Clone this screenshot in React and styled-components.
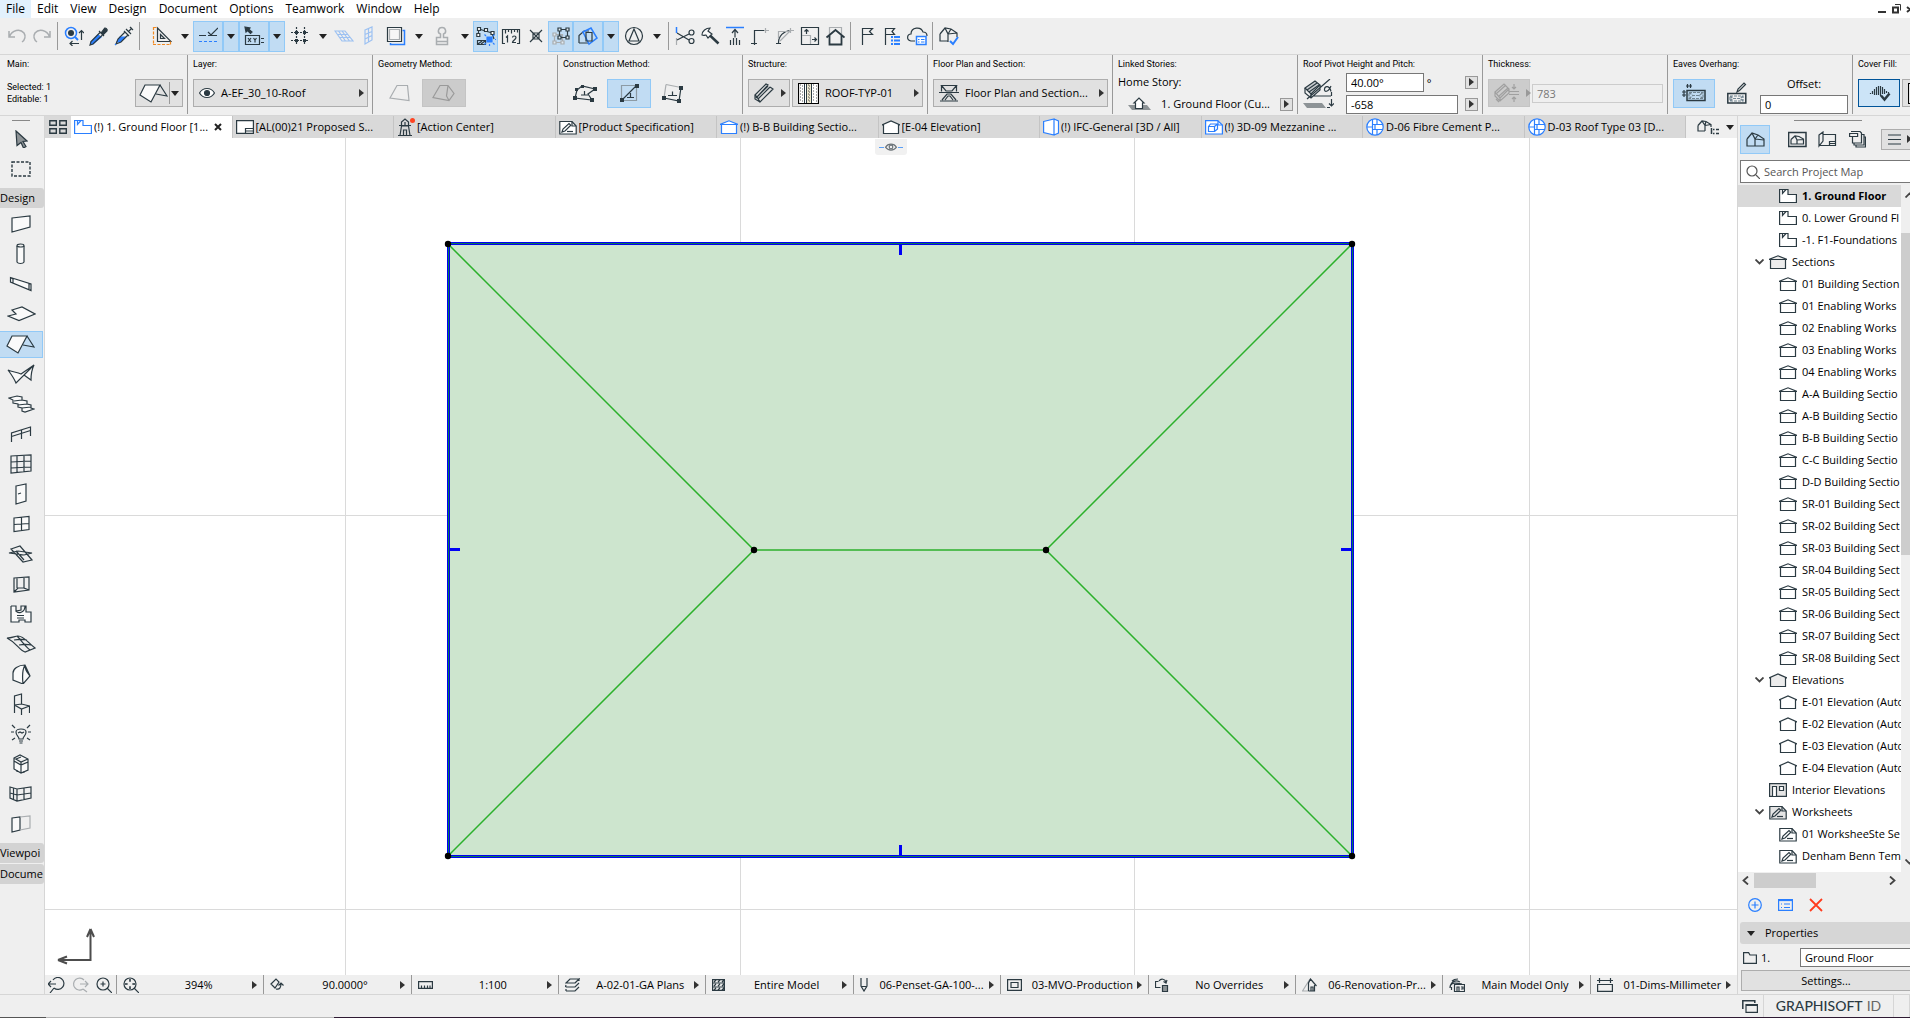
import React, { useState } from "react";
import styled, { createGlobalStyle, css } from "styled-components";

const INK = "#2b3a42";
const BLUE = "#2a7fff";
const GREY = "#a9adb0";
const PANEL = "#efefef";
const LINE = "#d6d6d6";
const ACTIVE = "#c1dcf3";
const ACTIVE_LINE = "#91c9f7";

const GlobalStyle = createGlobalStyle`
  * { box-sizing: border-box; }
  html, body, #root { height: 100%; }
  body {
    margin: 0;
    overflow: hidden;
    background: ${PANEL};
    color: #000;
    font-family: "Open Sans", "Noto Sans", sans-serif;
    font-size: 11px;
    line-height: 16px;
  }
  button, input {
    font: inherit;
    color: inherit;
    margin: 0;
  }
  button {
    padding: 0;
    border: 0;
    background: none;
    white-space: nowrap;
  }
  svg { display: block; flex: none; }
`;

/* ---------- icons: [width, height, drawing] ---------- */

const roofShape = (
  <>
    <path d="M6 2h15L12 19 1 12z" fill="#fafafa" />
    <path d="M21 2l7 11-11-2" />
  </>
);

const pencilPage = (c, fill) => (
  <>
    <path d="M.8 1.500H13l4.200 4.500v8H.8z" fill={fill} stroke={c} />
    <path d="M13 1.500V6h4" stroke={c} />
    <path d="M3 12l1-3 6-5.500 1.800 1.800L6 11z" stroke={c} />
    <path d="M8 11.500h6" stroke={c} />
  </>
);

const storyShape = (c) => (
  <>
    <path d="M.6 1.500h8.400v5h8.400v8H.6z" fill="#fff" stroke={c} />
    <path d="M3.500 1.500v4l3.500-4" stroke={c} />
  </>
);

const detailShape = (
  <>
    <circle cx="9" cy="9" r="8.200" fill="#fff" stroke={BLUE} />
    <path d="M6.500 1.500v15M11 1v5.500M11 17v-5.500M1 9h5.500M6.500 6.500H11M6.500 11.500H11M9 6.500h8M9 11.500h8M9 6.500v5" stroke={BLUE} />
  </>
);

const compositeDots = [];
for (let y = 2; y < 20; y += 3) {
  compositeDots.push(`M2 ${y}h1M4 ${y + 1}h1M10 ${y}h1M11 ${y + 1}h1M15 ${y}h1M18 ${y + 1}h1`);
}

const icons = {
  undo: [20, 18, <path key="a" stroke={GREY} strokeWidth="1.500" d="M2 4v6h6M2.500 9.500C5 3 13 1 17 6c2 3 1 7-2 9" />],
  redo: [20, 18, <path key="a" stroke={GREY} strokeWidth="1.500" d="M18 4v6h-6M17.500 9.500C15 3 7 1 3 6c-2 3-1 7 2 9" />],
  find: [20, 20, <>
    <circle cx="7" cy="7" r="5.500" stroke={BLUE} strokeWidth="1.500" />
    <path d="M11 11l3 3" stroke={BLUE} strokeWidth="2" />
    <circle cx="7" cy="7" r="3" fill={INK} stroke="none" />
    <path d="M17.500 5v9M15 7l2.500-2.500L20 7M15 17.500H6M8.500 15L6 17.500 8.500 20" />
  </>],
  dropper: [20, 20, <>
    <path d="M9 9l-7 7v2h2l8-7z" fill={BLUE} stroke={BLUE} />
    <path d="M10 5l5 5M12 7l3-4c1-2 4 0 3 2l-4 4z" fill={INK} />
    <path d="M11 6.500l-9 9-1 3.500 3-1 9.500-9" />
  </>],
  syringe: [20, 20, <>
    <path d="M6 11h5l-5 5H3z" fill={BLUE} stroke={BLUE} />
    <path d="M10 5l5 5M12 3l5 5M14.500 5.500L18 2M16 1l3 3M11 6l-7 7-2 5 5-2 7-7" />
    <path d="M2 18l-1 1" stroke={BLUE} />
  </>],
  square: [20, 20, <>
    <path d="M5.500 2v13.500H19zM8.500 8.500v4h4z" />
    <path d="M1.500 1v18M1 18.500h18" stroke="#f08a24" strokeDasharray="3 1.500" />
    <path d="M1.500 1.500h3M18.500 15.500v3" stroke="#f08a24" />
  </>],
  guide: [20, 20, <>
    <path d="M1 9.500h7M10 9.500h9M10 6l3 3 7-7" />
    <path d="M1 15.500h18" stroke={BLUE} strokeDasharray="3 2" />
  </>],
  coords: [22, 20, <>
    <path d="M2 1l5 1-1 1.500L9 6 7.500 7.500 4.500 4.500 3 6z" fill={INK} />
    <path d="M2.500 9.500h14v9h-14zM18 12.500h3M18 16.500h3M5 12l3 4M8 12l-3 4M10.500 12l1.500 2 1.500-2M12 14v2.500" />
  </>],
  snapGrid: [20, 20, <>
    <path d="M6.500 1v18M14.500 1v18M1 6.500h18M1 14.500h18" strokeDasharray="2 1" />
    <path d="M5 5h3v3H5zM13 5h3v3h-3zM5 13h3v3H5zM13 13h3v3h-3z" fill={INK} stroke="none" />
  </>],
  skewGrid: [20, 20, <path key="a" stroke="#9cc1f2" d="M1 5h10l8 10H8zM4 8.500h9.500M6 11.500h10M4.500 5l7 10M8 5l7.500 10" />],
  skewWall: [10, 20, <path key="a" stroke="#9cc1f2" d="M1 4l7-3v13l-7 4zM1 8.500l7-3M1 13l7-3.500M4.500 2.500v13.500" />],
  trace: [20, 20, <>
    <path d="M4.500 17v1.500h14v-14h-2" stroke={BLUE} strokeWidth="1.500" />
    <path d="M1.500 1.500h14v14h-14z" fill="#f6f6f6" />
    <path d="M3.500 3.500h10v10h-10z" stroke={GREY} />
  </>],
  stamp: [14, 20, <path key="a" stroke={GREY} strokeWidth="1.500" d="M1.500 18.500v-7h4V8C2 7 3 1.500 7 1.500S12 7 8.500 8v3.500h4v7zM1.500 15.500h11" />],
  editPoly: [20, 20, <>
    <path d="M3 3l13 4M3 3L2 9M16 7l2 6M1.500 14.500h8v4h-8zM2 18l4-3M5 18l4-3" />
    <path d="M1.500 1.500h3v3h-3zM8.500 2.500h3v3h-3zM.8 7.500h3v3h-3zM15 5.500h3v3h-3z" fill="#fff" />
    <path d="M11 11h5v5h-5z" fill={BLUE} stroke={BLUE} />
    <path d="M8.500 8.500l1.500 1.500M18.500 8.500L17 10M8.500 18.500L10 17M18.500 18.500L17 17M13.500 18v2M19 13.500h1" stroke={BLUE} />
  </>],
  ruler12: [20, 20, <>
    <path d="M4 17.500H1.500v-14h17v14H16M4.500 3.500v4M7.500 3.500v2.500M10.500 3.500v4M13.500 3.500v2.500M16.500 3.500v3" />
    <path d="M5 11.500L6.500 10v6.500M11.500 11.500c0-2 3.500-2 3.500 0s-3.500 3-3.500 5H15" />
  </>],
  cross: [14, 14, <path key="a" d="M1 1l12 12M13 1L1 13M4 4h6v6H4z" />],
  groupNodes: [20, 20, <>
    <path d="M3.500 8.500h8v8h-8z" stroke={GREY} />
    <path d="M8.500 3.500h8v8h-8z" />
    <path d="M2 7h3v3H2zM2 15h3v3H2zM10 15h3v3h-3z" fill="#dfeaf3" stroke={GREY} />
    <path d="M7 2h3v3H7zM15 2h3v3h-3zM15 10h3v3h-3zM7 10h3v3H7z" fill="#dfeaf3" />
  </>],
  rotate3d: [20, 20, <>
    <path d="M1 17V9.500L6 5h5M1 17h9" />
    <path d="M5 6l8-4 6 10-8 6z" stroke={BLUE} strokeWidth="1.500" />
    <path d="M8 6.500h6V15H8z" />
  </>],
  north: [20, 20, <>
    <circle cx="10" cy="10" r="8.500" />
    <path d="M10 3L5 15h10z" />
  </>],
  scissors: [20, 20, <>
    <path d="M1.500 1v6" stroke={BLUE} strokeWidth="1.500" /><path d="M1.500 12v7" stroke={GREY} />
    <path d="M2 7l12 7M2 14l12-6" />
    <circle cx="16.500" cy="6.500" r="2.500" /><circle cx="16.500" cy="15" r="2.500" />
  </>],
  axe: [20, 20, <>
    <path d="M2 9c0-4 4-7 8-7l-2 3 4 3-4 4-2-3c-1 0-2 1-4 0z" fill="#fafafa" />
    <path d="M10 9.500l8.500 8" strokeWidth="2.500" />
  </>],
  adjust: [20, 20, <>
    <path d="M1 1.500h18" stroke={BLUE} strokeWidth="1.500" />
    <path d="M10 3.500v8M7 7l3-3.500L13 7M5.500 14v5M8.500 12v7M11.500 12v7M14.500 14v5" />
  </>],
  corner: [20, 20, <><path d="M4.500 19V4.500H14M1 17.500h6" /><path d="M14 4.500h5M15.500 2v5" stroke={GREY} /></>],
  fillet: [20, 20, <><path d="M3.500 18C3 10 9 5 15 4.500M1 17.500h5" /><path d="M3.500 13V5.500H14M14 4.500h5M15.500 2v5M5 15L15 5" stroke={GREY} /></>],
  resize: [20, 20, <>
    <path d="M1.500 1.500h17v17h-17z" /><path d="M2 9.500h8.500V18" stroke={GREY} />
    <path d="M6.500 8V3M4.500 5.500l2-2 2 2M12 13.500h5M14.500 11.500l2 2-2 2" />
  </>],
  home: [20, 20, <>
    <path d="M4.500 8V1.500h12V8" stroke={GREY} />
    <path d="M1.500 11.500L10.500 4l9 7.500M4.500 9.500v9h12v-9" strokeWidth="1.800" />
  </>],
  flag: [16, 20, <path key="a" d="M3.500 19V2.500h10l-3 3 3 3h-10" />],
  flagList: [20, 20, <>
    <path d="M3.500 19V2.500h9l-2.500 3 2.500 3h-9" />
    <path d="M9 11h2M12 11h6M9 14.500h2M12 14.500h6M9 18h2M12 18h6" stroke={BLUE} strokeWidth="2" />
  </>],
  cloud: [22, 20, <>
    <path d="M9 15H5c-5-1-4-7 0-7 0-7 10-8 12-2 3 0 4 2 4 4" />
    <path d="M10.500 10.500h9.500v8h-9.500z" fill="#fff" stroke={BLUE} strokeWidth="1.500" />
    <path d="M12 13.500h1.500M15 13.500h3.500M12 16h1.500M15 16h3.500" stroke={BLUE} />
  </>],
  houseCheck: [20, 20, <>
    <path d="M1 8l5-6 6 1 6 4v4M1 8v7h8M9 16V8L6 2M9 8l9-1M12 3L9 8" />
    <path d="M11 15l3 3 5-7" stroke={BLUE} strokeWidth="2" />
  </>],
  roof: [29, 21, roofShape],
  trapezoid: [22, 18, <path key="a" stroke={GREY} d="M1 14L8 1.500h10.500L20 16.500z" />],
  trapezoidEdge: [24, 18, <path key="a" stroke="#9a9a9a" d="M1 13.500L8 1.500h8l6 8-5 7zM16 1.500L14.500 12l2.500 4.500" />],
  eye: [16, 12, <>
    <path d="M.5 6C4 0 12 0 15.500 6 12 12 4 12 .5 6z" fill="#fff" />
    <circle cx="8" cy="6" r="2.500" fill={INK} />
  </>],
  quickEye: [24, 8, <>
    <path d="M0 4.500h5M19 4.500h5" stroke="#5a9ff5" />
    <path d="M6.500 4.200C9 0 15 0 17.500 4.200 15 8 9 8 6.500 4.200z" stroke="#6b7378" />
    <circle cx="12" cy="4" r="1.800" stroke="#6b7378" />
  </>],
  poly: [24, 18, <>
    <path d="M2 14L4 6l5-4 13 3-7 5 4 6z" />
    <path d="M0 12h4v4H0zM2 4h3v3H2zM8 1h3v3H8zM20 3h4v4h-4zM17 14h4v4h-4z" fill={INK} stroke="none" />
    <path d="M8 11h7M11.500 7v4" />
  </>],
  rectPoly: [20, 18, <>
    <path d="M2.500 1.500h15v15h-15z" stroke="#8d9ba5" />
    <path d="M2.500 16.500l15-15M8 13.500h7M11.500 9v4.500" />
    <path d="M1 14h4v4H1zM16 0h4v4h-4z" fill={INK} stroke="none" />
  </>],
  rotRect: [22, 20, <>
    <path d="M4 1.500l15 3" stroke={GREY} /><path d="M4 1.500L2 15" stroke={GREY} />
    <path d="M2 15l15 3 2-13.500M6 12.500h9M10.500 8.500v4" />
    <path d="M0 13h4v4H0zM17 3h4v4h-4zM15 16h4v4h-4z" fill={INK} stroke="none" />
  </>],
  plank: [20, 20, <path key="a" d="M1 12L12 1l2 1L3 14zM3 14l3 5L19 6l-3-2M1 12v4l5 3M4 16L16 4M2 15L14 3" />],
  composite: [21, 21, <>
    <path d="M0 0h21v21H0z" fill="#fff" stroke="none" />
    <path d="M8 0h5v21H8z" fill="#efe9cf" stroke="none" />
    <path d={compositeDots.join("")} stroke="#555" />
    <path d="M6.500 0v21M8.500 0v21M13.500 0v21" strokeWidth="1" />
    <path d="M.5.5h20v20H.5z" stroke="#000" />
  </>],
  planSection: [20, 18, <path key="a" d="M2.500 1v6.500M17.500 1v6.500M0 8.500h20M2.500 1.500h15L13 7H7zM1 17h18M3 16L8 10h4l5 6M6 16l3-4h2l3 4" />],
  homeStory: [23, 14, <>
    <path d="M0 8h19l4 5H4z" fill="#8d9396" stroke="none" />
    <path d="M6 6l5-5 5 5h-1.500v5.500h-7V6z" fill="#fff" />
  </>],
  pitch: [31, 29, <>
    <path d="M2 9L12 2l5 4-9 9z" fill="#c9cdd0" />
    <path d="M2 9v5l6 5 9-8V6M8 15v4M4 11l10-7M6 13l10-7M4 20L27 0M10 17h18" />
    <path d="M28 7c-3 7-7 6-6.500 3s5-4 6.500 2.500" />
    <path d="M0 24h19l4 5H4z" fill="#8d9396" stroke="none" />
    <path d="M28.500 13v4M28.500 20v7M26 24.500l2.500 2.500 2.500-2.500M24 28.500h3" />
  </>],
  thick: [26, 20, <path key="a" stroke="#a0a0a0" d="M1 9L10 1l5 5-9 9zM1 9v4l5 5 9-8V6M6 15v3M3 10l9-8M5 13l9-8M5 19l-3-3M20 1v5M18 4l2 2 2-2M20 19v-5M18 16l2-2 2 2M15 8.500h10M15 11.500h10" />],
  eaves: [24, 18, <>
    <path d="M5 6.500h18v10H5z" strokeWidth="1.500" />
    <path d="M7 8.500h14v6H7zM7 8.500l4 3h6l4-3M7 14.500l4-3M21 14.500l-4-3" stroke="#718592" strokeDasharray="3 1" />
    <path d="M5.500 0v4M8.500 0v4M4 2h6M0 8h4M0 11h4M2 6v7" />
  </>],
  eavesEdit: [20, 22, <>
    <path d="M.8 11.500h18v9.500H.8z" strokeWidth="1.500" />
    <path d="M3 14h13v5H3zM3 14l3 2.500h7L16 14M3 19l3-2.500M16 19l-3-2.500" stroke="#718592" strokeDasharray="3 1" />
    <path d="M10 10l1-3 6-6 1.500 1.500-6 6z" />
  </>],
  coverFill: [22, 18, <>
    <path d="M1.500 9v1M3.500 7v3M5.500 5v6M7.500 3v8M9.500 2v9M11.500 2v10M13.500 3v7M15.500 5v5M17.500 7v2M19.500 8v1" />
    <path d="M12 11.500l3.500 4 5-6" strokeWidth="2.500" />
  </>],
  grid4: [18, 14, <path key="a" strokeWidth="1.400" d="M.8.8h6.500v4.500H.8zM10.800.8h6.500v4.500h-6.500zM.8 8.700h6.500v4.500H.8zM10.800 8.700h6.500v4.500h-6.500z" />],
  storyBlue: [18, 16, storyShape(BLUE)],
  story: [18, 16, storyShape(INK)],
  layout: [18, 14, <>
    <path d="M.6.6h16.800v12.800H.6z" fill="#fff" /><path d="M9.500 13.500v-5h8M9.500 11h8" />
  </>],
  tower: [18, 18, <>
    <path d="M3 17.500L4.500 8h7L13 17.500zM2 7.500h12M4.500 7V4l3.500-3 3.500 3v3M6.500 17V12h3v5M1 17.500h14M8 4v3" />
    <circle cx="15.500" cy="2.500" r="2.500" fill="#ff4422" stroke="none" />
  </>],
  pencil: [18, 15, pencilPage(INK, "#fff")],
  pencilGrey: [18, 15, pencilPage(INK, "#e4e4e4")],
  sectionBlue: [18, 14, <>
    <path d="M1.500 4v9.500h15V4" fill="#fff" stroke={BLUE} /><path d="M0 4.500L9 .8l9 3.700z" fill="#fff" stroke={BLUE} />
  </>],
  section: [18, 14, <><path d="M1.500 4v9.500h15V4" fill="#fff" /><path d="M0 4.500L9 .8l9 3.700z" fill="#fff" /></>],
  sectionGrey: [18, 14, <><path d="M1.500 4v9.500h15V4" fill="#ececec" /><path d="M0 4.500L9 .8l9 3.700z" fill="#ececec" /></>],
  elevation: [18, 14, <path key="a" fill="#fff" d="M0 5L9 1l9 4h-1.500v8.500h-15V5z" />],
  elevationGrey: [18, 14, <path key="a" fill="#ececec" d="M0 5L9 1l9 4h-1.500v8.500h-15V5z" />],
  box3d: [16, 18, <>
    <path d="M.6 3.500L11 1v16L.6 14.500zM11 1l4.500 2v12L11 17" fill="#fff" stroke={BLUE} />
  </>],
  doc3d: [18, 15, <>
    <path d="M.6.6h12l4.800 4.400v9H.6z" fill="#fff" stroke={BLUE} />
    <path d="M3.500 6.500h6v5h-6zM3.500 6.500l2-2.500h7v5l-3 2.500M9.500 6.500l3-2.500M13 .5V5h4" stroke={BLUE} />
  </>],
  detail: [18, 18, detailShape],
  modelList: [22, 16, <>
    <path d="M1 6.500L5 2l4 .5 5 3V8M1 6.500V12h7M8 12V6.500L5 2M8 6.500l6-1M9 2.500L8 6" />
    <path d="M14.500 9v6M16 10.500h1.500M19 10.500h3M16 14.500h1.500M19 14.500h3" strokeWidth="1.500" />
  </>],
  house: [19, 17, <path key="a" d="M1 8l5-6 6 2 6 4v7H9V8L6 2M1 8v7h8M9 8l9 1M12 4L9 8" />],
  houseFrame: [19, 17, <>
    <path d="M.6 1.500h17.400v14H.6z" strokeWidth="1.500" />
    <path d="M3 8.500L7 5l4 .5L15.500 8v5H9V9L7 5M3 8.500V13h6M9 9l6.500-.5" />
  </>],
  viewBook: [19, 17, <path key="a" d="M1 4l4-3v9l-4 5zM5 3.500h12.500v11H1M11.500 14.500v-4h6M11.500 12.500h6" />],
  publisher: [17, 18, <>
    <path d="M2 1.500h9l1.500 1.500v10h-9V6M.6 3.500h8v3h-8z" /><path d="M5 13v2h10V4.500h-2M7 15.500v1.500h9.500V7h-1.500" />
  </>],
  menu: [13, 11, <path key="a" d="M0 1h13M0 5.500h13M0 10h13" />],
  search: [14, 14, <><circle cx="6" cy="6" r="5" stroke="#555" /><path d="M10 10l4 4" stroke="#555" /></>],
  chevDown: [9, 6, <path key="a" stroke="#444" strokeWidth="1.800" d="M.5.5l4 4 4-4" />],
  chevUp: [9, 6, <path key="a" stroke="#444" strokeWidth="1.800" d="M.5 5.500l4-4 4 4" />],
  chevLeft: [7, 9, <path key="a" stroke="#444" strokeWidth="1.800" d="M6 .5l-4.500 4 4.500 4" />],
  chevRight: [7, 9, <path key="a" stroke="#444" strokeWidth="1.800" d="M1 .5l4.500 4-4.500 4" />],
  interior: [18, 14, <><path d="M.6.6h16.800v12.800H.6z" fill="#e4e4e4" /><path d="M3.500 13V3.500h4V13M10.500 3.500h4v4h-4z" fill="#fff" /></>],
  add: [14, 14, <><circle cx="7" cy="7" r="6.300" stroke={BLUE} /><path d="M7 3.500v7M3.500 7h7" stroke={BLUE} /></>],
  listBlue: [15, 12, <>
    <path d="M.6.6h13.800v10.800H.6z" stroke={BLUE} /><path d="M.5 1.500h14" stroke={BLUE} />
    <path d="M3 5h1M6 5h6M3 8.500h1M6 8.500h6" stroke={BLUE} />
  </>],
  remove: [14, 14, <path key="a" stroke="#ff3b1d" strokeWidth="1.800" d="M1 1l12 12M13 1L1 13" />],
  folder: [14, 12, <path key="a" d="M.6.6h5l1.400 2.400h6.400v8.400H.6z" />],
  windows: [16, 13, <><path d="M.8 9V.8h12V3" strokeWidth="1.500" /><path d="M4 4.500h11.400v7.900H4zM4 5.500h11.400" /></>],
  zoomBack: [17, 16, <><path d="M5 3a6 6 0 1 1 1 8M6 11l-4 5M0 7h8M3 4L0 7l3 3" /></>],
  zoomNext: [17, 16, <><path stroke={GREY} d="M12 3a6 6 0 1 0-1 9M11 12l4 3M8 7h8M13 4l3 3-3 3" /></>],
  zoomIn: [16, 16, <><circle cx="7" cy="7" r="6" /><path d="M11 11l5 5M7 4.500v5M4.500 7h5" /></>],
  zoomFit: [16, 16, <><circle cx="7" cy="7" r="6" /><path d="M11 11l5 5M7 2v3M7 9v3M2 7h3M9 7h3M6 3h2M6 11h2M3 6v2M11 6v2" /></>],
  orient: [14, 13, <path key="a" d="M1 6l5-5 3 3-4 6zM6 11c4 1 5-2 5-6M8.500 7.500L11 5l2.500 2.500" />],
  scaleBar: [15, 8, <path key="a" d="M.6.6h13.800v6.800H.6zM3.500 7V4.500M6.500 7V4.500M9.500 7V4.500M12 7V4.500" />],
  layers: [15, 14, <path key="a" d="M1 5l4-4h9l-4 4zM1 9h9l4-4M1 7l-.5 2M1 13h9l4-4M1 11v2M10 5l4-4v2" />],
  hatch: [13, 12, <path key="a" d="M.6.6h11.800v10.800H.6zM.6 4h12M.6 8h12M2 3l2-2M6 3l2-2M10 3l2-2M2 7l2-2M6 7l2-2M10 7l2-2M2 11l2-2M6 11l2-2M10 11l2-2" />],
  pen: [8, 14, <path key="a" d="M1 0v8l3 5 3-5V0M1 8.500h6" />],
  mvo: [15, 12, <path key="a" d="M.6.6h13.800v10.800H.6zM4 3.500h7v5H4z" />],
  override: [14, 14, <><path d="M5.500 9.500h-5v-6h3M4 3c2-3 6-2 7 1M8.500 3.500L11 5l1-3" /><path d="M7.500 7.500h5v6h-5z" fill="#8d9396" /></>],
  renovation: [15, 14, <><path d="M6.500 13H.5L8 1" stroke={GREY} /><path d="M6.500 13V5l2-4 6 7M12.500 7v6H6.500M9 13V9h2v4" /></>],
  mainModel: [16, 14, <path key="a" d="M5.500 13.500v-7h10v7zM8 13V9h2v4M12 9h2v2h-2M1 10c0-5 3-6 12-4M2 6c2-3 5-4 9-2M3 3c2-2 4-2 6-2M2.500 12V9" />],
  dims: [16, 14, <path key="a" d="M0 2.500h16M2.500 0v5M13.500 0v5M.6 6.500h14.800v6.900H.6z" />],

  /* toolbox */
  arrow: [13, 18, <path key="a" fill="#8d9396" d="M1 1l11 10-4 .5 3 5-2.500 1.500-2.500-5.500-4 3z" />],
  marquee: [20, 16, <path key="a" strokeDasharray="3 1.500" strokeWidth="1.400" d="M1 1h18v14H1z" />],
  wall: [20, 20, <path key="a" fill="#fafafa" d="M1 4l18-2v11L1 18z" />],
  column: [10, 22, <><path d="M1 3v16c1 2 6 2 7 0V3" fill="#fafafa" /><ellipse cx="4.500" cy="2.500" rx="3.500" ry="1.500" /></>],
  beam: [24, 16, <path key="a" fill="#fafafa" d="M1.500 1.500L22 8v6.500L1.500 6zM1.500 1.500L4 3v3.500M22 8l-2 0v5.500" />],
  slab: [29, 16, <path key="a" fill="#fafafa" d="M5 4l10-3 13 7-16 6.500L1 10l8-2z" />],
  shell: [28, 20, <path key="a" fill="#fafafa" d="M1 6c4 2 9 2 13 4L27 1c-2 4-3 9-3 15l-7-5-8 8C7 14 4 10 1 6zM27 1L17 11" />],
  stair: [27, 18, <path key="a" fill="#fafafa" d="M1 3l8-2 5 1v3l5 1v3l4 1v3l3 1-9 3-3-1v-3l-4-1v-3l-5-1V5zM6 6l8-1M10 10l9-1M14 13l9-1" />],
  railing: [22, 16, <path key="a" d="M1.500 16V7l19-6v9M1.500 10.500l19-6M11.500 4v9" />],
  curtain: [22, 20, <path key="a" d="M1 2l20-1v16L1 19zM7 2v16M14 1.500v16.500M1 8l20-1M1 14l20-1" />],
  door: [13, 22, <><path d="M1 3l10-2v17L1 21z" fill="#fafafa" /><path d="M3 11l3-1" /></>],
  window: [17, 18, <path key="a" fill="#fafafa" d="M1 3l15-1.500v13L1 16.500zM8.500 2v13.500M1 9.500l15-1" />],
  skylight: [26, 18, <path key="a" d="M3 4l9-3 12 14-9 2zM1 8l15 2 8-2-14-2zM8 6l8 9" />],
  opening: [17, 17, <path key="a" d="M1 2l15-1v13L1 16zM11 1.500V12L16 14M1 16l4-4h6M4 2v10" />],
  zone: [22, 18, <path key="a" fill="#fafafa" d="M1 1h5v5l5-1V1h5v6h5v10h-6v-2h-6v2H1V1M6 6c2 3 9 2 9-5M7 10.500h7M7 13h7" />],
  mesh: [30, 18, <path key="a" d="M1 3c5 0 8-2 11-2 6 0 9 6 17 12l-10 4C13 15 11 8 1 3zM8 5c5-1 9-1 13 0M13 10c5-1 8-1 12 0M11 1c4 4 8 10 13 14" />],
  morph: [19, 20, <path key="a" fill="#fafafa" d="M1 9c0-4 5-8 12-8l5 11-7 8-10-4zM13 1c-3 5-3 10-2 19M13 1c0 6 2 7 5 11" />],
  chair: [17, 22, <path key="a" d="M1.500 20V3l7-2v10M1.500 12l7-1 8 2v7M1.500 12l7 4 8-3M8.500 16v6" />],
  lamp: [20, 20, <>
    <path d="M8 15c0-3-3-3-3-7s10-4 10 0-3 4-3 7zM8 17h4M8.500 19h3M7 9l2-1 2 1 2-1" />
    <path d="M1 1l3 3M19 1l-3 3M0 8h3M17 8h3M1 16l3-2M19 16l-3-2" />
  </>],
  equipment: [16, 20, <path key="a" fill="#fafafa" d="M1 4l6-3 8 4v11l-7 3-7-4zM1 4l7 4 7-3M8 8v11M3 5l5-2M1 7l7 4 7-3M4 16v2M11 17v2" />],
  curtainCorner: [24, 18, <path key="a" d="M1 2l7 2 14-2v11L8 16l-7-3zM4.500 3v11M8 4v12M15 3v11.500M1 8l7 2 14-2" />],
  panel: [20, 18, <><path d="M1 3l8-1v13l-8 2z" fill="#fafafa" /><path d="M9 2l10-1v12L9 15" stroke={GREY} /></>],
};

const Icon = ({ name }) => {
  const [w, h, drawing] = icons[name];
  return (
    <svg width={w} height={h} viewBox={`0 0 ${w} ${h}`} fill="none" stroke={INK} strokeWidth="1.2" aria-hidden="true">
      {drawing}
    </svg>
  );
};

const Caret = styled.span`
  width: 0;
  height: 0;
  flex: none;
  ${({ $right, $light }) => $right
    ? css`
      border-left: 5px solid ${$light ? "#999" : "#333"};
      border-top: 4px solid transparent;
      border-bottom: 4px solid transparent;`
    : css`
      border-top: 5px solid ${$light ? "#777" : "#222"};
      border-left: 4px solid transparent;
      border-right: 4px solid transparent;`}
`;

/* ---------- shell ---------- */

const Shell = styled.div`
  height: 100vh;
  display: flex;
  flex-direction: column;
`;

const MenuBar = styled.nav`
  display: flex;
  height: 18px;
  background: #fff;
  font-size: 12px;
`;

const MenuItem = styled.button`
  height: 18px;
  padding: 0 6px;
  line-height: 18px;
  background: ${({ $open }) => ($open ? "#e2f1fd" : "none")};
`;

const WindowButtons = styled.div`
  margin-left: auto;
  display: flex;
  align-items: center;
`;

const ToolBar = styled.div`
  display: flex;
  align-items: center;
  height: 37px;
  padding-left: 4px;
  border-bottom: 1px solid ${LINE};
`;

const ToolButton = styled.button`
  width: ${({ $wide, $caret }) => ($caret ? 16 : $wide ? 30 : 25)}px;
  height: 31px;
  display: flex;
  align-items: center;
  justify-content: center;
  ${({ $on }) => $on && css`
    background: ${ACTIVE};
    border: 1px solid ${ACTIVE_LINE};
  `}
`;

const ToolRule = styled.span`
  width: 1px;
  height: 28px;
  margin: 0 3px;
  background: #999;
`;

const ToolGap = styled.span`
  width: 4px;
`;

/* ---------- info box ---------- */

const InfoBox = styled.div`
  display: flex;
  height: 61px;
  overflow: hidden;
  border-bottom: 1px solid ${LINE};
`;

const InfoCell = styled.section`
  flex: none;
  width: 185px;
  height: 59px;
  padding-left: 5px;
  border-right: 1px solid #999;
  &:first-child { width: 188px; padding-left: 7px; }
  &:last-child { border-right: 0; }
`;

const InfoLabel = styled.h2`
  margin: 0;
  height: 17px;
  font-family: Roboto, "Open Sans", sans-serif;
  font-size: 9px;
  font-weight: 400;
  line-height: 18px;
`;

const InfoBody = styled.div`
  display: flex;
  align-items: center;
  gap: ${({ $gap }) => $gap ?? 2}px;
  height: 42px;
  padding-right: 4px;
`;

const Small = styled.p`
  margin: 0;
  flex: 1;
  font-family: Roboto, "Open Sans", sans-serif;
  font-size: 9px;
  line-height: 12px;
`;

const BoxButton = styled.button`
  display: flex;
  align-items: center;
  justify-content: space-between;
  gap: 6px;
  height: 28px;
  padding: 0 3px 0 5px;
  background: #e1e1e1;
  border: 1px solid #adadad;
  ${({ $grow }) => $grow ? "flex: 1;" : "width: 42px;"}
  ${({ $disabled }) => $disabled && "background: #ccc; border-color: #c4c4c4;"}
  ${({ $focus }) => $focus && "background: #cce4f7; border-color: #005499; justify-content: center;"}
`;

const BoxText = styled.span`
  flex: 1;
  text-align: left;
`;

const Split = styled(BoxButton)`
  width: 48px;
  gap: 1px;
  padding: 0 3px;
`;

const SplitRule = styled.span`
  width: 1px;
  height: 22px;
  background: #999;
`;

const Method = styled.button`
  display: flex;
  align-items: center;
  justify-content: center;
  width: 44px;
  height: ${({ $disabled }) => ($disabled ? 28 : 29)}px;
  ${({ $on }) => $on && css`
    background: ${ACTIVE};
    border: 1px solid ${ACTIVE_LINE};
  `}
  ${({ $disabled }) => $disabled && "background: #ccc; border: 1px solid #c4c4c4;"}
`;

const TinyButton = styled.button`
  display: flex;
  align-items: center;
  justify-content: center;
  width: 13px;
  height: 13px;
  background: #e1e1e1;
  border: 1px solid #999;
`;

const Stack = styled.div`
  flex: 1;
  display: flex;
  flex-direction: column;
  gap: 2px;
`;

const StackRow = styled.div`
  display: flex;
  align-items: center;
  height: 20px;
  justify-content: ${({ $between }) => ($between ? "space-between" : "flex-start")};
`;

const Field = styled.input`
  width: ${({ $w }) => $w}px;
  height: 19px;
  padding: 0 4px;
  border: 1px solid #777;
  background: #fff;
  &:disabled {
    background: ${PANEL};
    border: 1px solid #ccc;
    color: #777;
  }
`;

const CenterLabel = styled.label`
  height: 20px;
  line-height: 22px;
  text-align: center;
`;

/* ---------- middle ---------- */

const Middle = styled.div`
  flex: 1;
  min-height: 0;
  display: flex;
`;

const Toolbox = styled.aside`
  width: 45px;
  border-right: 1px solid ${LINE};
  display: flex;
  flex-direction: column;
  overflow: hidden;
`;

const Grip = styled.div`
  flex: none;
  width: ${({ $w }) => $w}px;
  height: 1px;
  margin: 4px ${({ $w }) => ($w > 20 ? "56px" : "12px")} 3px;
  background: #888;
`;

const ToolList = styled.div`
  display: flex;
  flex-direction: column;
  padding-bottom: 4px;
`;

const ToolItem = styled.button`
  display: flex;
  align-items: center;
  justify-content: center;
  height: 30px;
  width: 44px;
  padding-right: 2px;
`;

// a pressed tool is a little shorter than its slot
const ToolFace = styled.span`
  display: flex;
  align-items: center;
  justify-content: center;
  width: 44px;
  height: 27px;
  ${({ $on }) => $on && css`
    flex: none;
    background: ${ACTIVE};
    border: 1px solid ${ACTIVE_LINE};
    border-left: 0;
  `}
`;

const ToolHeader = styled.button`
  height: 20px;
  margin-bottom: 1px;
  width: 44px;
  background: #d3d3d3;
  border-radius: 0 3px 3px 0;
  text-align: left;
  overflow: hidden;
`;

const Work = styled.main`
  flex: 1;
  min-width: 0;
  display: flex;
  flex-direction: column;
`;

const TabBar = styled.div`
  display: flex;
  height: 22px;
  background: #d9d9d9;
`;

const TabGrid = styled.button`
  width: 26px;
  display: flex;
  align-items: center;
  justify-content: center;
`;

const Tab = styled.button`
  flex: 1 1 0;
  min-width: 0;
  display: flex;
  align-items: center;
  gap: 2px;
  padding: 0 6px 0 3px;
  border-right: 1px solid #c4c4c4;
  ${({ $on }) => $on && "background: #fff;"}
`;

const TabText = styled.span`
  flex: 1;
  overflow: hidden;
  text-align: left;
`;

const TabMore = styled.button`
  width: 51px;
  display: flex;
  align-items: center;
  justify-content: space-between;
  padding: 0 3px 0 11px;
  background: ${PANEL};
`;

const Canvas = styled.div`
  flex: 1;
  min-height: 0;
  position: relative;
  background: #fff;
  overflow: hidden;
`;

const Plan = styled.svg`
  width: 100%;
  height: 100%;
`;

const EyeTab = styled.button`
  position: absolute;
  top: 1px;
  left: calc(50% - 16px);
  width: 32px;
  height: 16px;
  display: flex;
  align-items: center;
  justify-content: center;
  background: #f1f1f1;
  border-radius: 0 0 3px 3px;
`;

const StatusBar = styled.footer`
  display: flex;
  height: 19px;
`;

const ZoomGroup = styled.div`
  display: flex;
  align-items: center;
  gap: 7px;
  width: 71px;
  padding-left: 3px;
`;

const Status = styled.button`
  flex: 1 1 0;
  min-width: 0;
  display: flex;
  align-items: center;
  padding: 0 6px;
  border-left: 1px solid #999;
`;

const StatusText = styled.span`
  flex: 1;
  padding-left: 6px;
  text-align: center;
`;

const BareButton = styled.button`
  display: flex;
`;

/* ---------- navigator ---------- */

const Navigator = styled.aside`
  width: 173px;
  border-left: 1px solid ${LINE};
  display: flex;
  flex-direction: column;
  overflow: hidden;
`;

const NavModes = styled.div`
  display: flex;
  align-items: center;
  height: 30px;
  padding-left: 2px;
`;

const NavMode = styled.button`
  display: flex;
  flex: none;
  align-items: center;
  justify-content: center;
  width: 30px;
  height: 29px;
  ${({ $on }) => $on && `background: ${ACTIVE}; border: 1px solid ${ACTIVE_LINE};`}
`;

const NavMenu = styled.button`
  flex: none;
  display: flex;
  align-items: center;
  gap: 6px;
  width: 40px;
  height: 21px;
  margin-left: 9px;
  padding-left: 6px;
  background: #e1e1e1;
  border: 1px solid #adadad;
`;

const NavRule = styled.span`
  width: 1px;
  height: 20px;
  margin: 0 6px;
  background: #999;
`;

const SearchBox = styled.label`
  display: flex;
  align-items: center;
  gap: 4px;
  height: 23px;
  margin: 6px 0 2px 2px;
  padding-left: 5px;
  background: #fff;
  border: 1px solid #777;
  border-right: 0;
`;

const SearchInput = styled.input`
  flex: 1;
  min-width: 0;
  padding: 0;
  border: 0;
  outline: 0;
  background: none;
  &::placeholder { color: #555; opacity: 1; }
`;

const TreeWrap = styled.div`
  flex: 1;
  min-height: 0;
  display: flex;
`;

const Tree = styled.div`
  flex: 1;
  min-width: 0;
  background: #fff;
  overflow: hidden;
`;

const TreeRow = styled.button`
  width: 100%;
  height: 22px;
  display: flex;
  align-items: center;
  gap: 5px;
  overflow: hidden;
  padding-left: ${({ $depth }) => ($depth ? 41 : 17)}px;
  ${({ $on }) => $on && "background: #d9d9d9; font-weight: 700;"}
`;

const Twisty = styled.span`
  width: 9px;
  flex: none;
`;

const VScroll = styled.div`
  width: 9px;
  display: flex;
  flex-direction: column;
  overflow: hidden;
`;

const VEnd = styled.button`
  height: ${({ $first }) => ($first ? 48 : 20)}px;
  display: flex;
  align-items: ${({ $first }) => ($first ? "flex-start" : "center")};
  padding: ${({ $first }) => ($first ? "7px 0 0 4px" : "0 0 0 4px")};
  margin-top: ${({ $first }) => ($first ? 0 : "auto")};
`;

const VThumb = styled.div`
  height: 322px;
  background: #cdcdcd;
`;

const HScroll = styled.div`
  display: flex;
  align-items: center;
  height: 16px;
  padding: 0 14px 0 4px;
  gap: 5px;
`;

const HThumb = styled.div`
  width: 62px;
  height: 15px;
  margin-right: auto;
  background: #cdcdcd;
`;

const NavActions = styled.div`
  display: flex;
  align-items: center;
  gap: 16px;
  height: 34px;
  padding-left: 10px;
`;

const PropHeader = styled.button`
  display: flex;
  align-items: center;
  gap: 10px;
  height: 22px;
  margin: 0 0 4px 2px;
  padding-left: 7px;
  background: #d6d6d6;
  border-radius: 3px 0 0 3px;
`;

const PropRow = styled.div`
  display: flex;
  align-items: center;
  gap: 4px;
  height: 19px;
  margin-bottom: 3px;
  padding-left: 5px;
`;

const PropId = styled.label`
  flex: none;
  width: 35px;
`;

const Settings = styled.button`
  height: 21px;
  margin: 0 0 3px 3px;
  background: #e1e1e1;
  border: 1px solid #adadad;
  border-right: 0;
`;

const BottomBar = styled.footer`
  display: flex;
  align-items: flex-start;
  justify-content: flex-end;
  height: 24px;
  border-top: 1px solid ${LINE};
  background: linear-gradient(90deg, #555 46px, #b9b9b9 46px 334px, #2f1a33 334px) bottom / 100% 1px no-repeat;
`;

const BottomItem = styled.button`
  display: flex;
  align-items: center;
  justify-content: center;
  width: ${({ $w }) => $w}px;
  height: 22px;
  border-right: 1px solid ${LINE};
  color: ${INK};
  font-family: Lato, sans-serif;
  font-size: 14px;
  font-weight: 500;
`;

const Thin = styled.span`
  font-weight: 400;
  color: #666;
  margin-left: 4px;
`;

/* ---------- data ---------- */

const menus = ["File", "Edit", "View", "Design", "Document", "Options", "Teamwork", "Window", "Help"];

// "|" is a rule, "_" a gap, "v" a menu caret, "*" marks a pressed button, "+" a wide one
const tools = [
  "undo", "redo", "|", "find", "dropper", "syringe", "|", "_",
  "+square", "v", "*+guide", "*v", "*+coords", "*v", "+snapGrid", "v",
  "skewGrid", "skewWall", "+trace", "v", "+stamp", "v",
  "*editPoly", "ruler12", "cross", "*groupNodes", "*+rotate3d", "*v", "+north", "v", "|",
  "scissors", "axe", "adjust", "corner", "fillet", "resize", "home", "|",
  "flag", "flagList", "cloud", "|", "houseCheck",
];

const designTools = [
  "wall", "column", "beam", "slab", "roof", "shell", "stair", "railing", "curtain", "door", "window",
  "skylight", "opening", "zone", "mesh", "morph", "chair", "lamp", "equipment", "curtainCorner", "panel",
];

const tabs = [
  ["storyBlue", "(!) 1. Ground Floor [1..."],
  ["layout", "[AL(00)21 Proposed S..."],
  ["tower", "[Action Center]"],
  ["pencil", "[Product Specification]"],
  ["sectionBlue", "(!) B-B Building Sectio..."],
  ["elevation", "[E-04 Elevation]"],
  ["box3d", "(!) IFC-General [3D / All]"],
  ["doc3d", "(!) 3D-09 Mezzanine ..."],
  ["detail", "D-06 Fibre Cement P..."],
  ["detail", "D-03 Roof Type 03 [D..."],
];

const statuses = [
  ["zoomFit", "394%"],
  ["orient", "90.0000°"],
  ["scaleBar", "1:100"],
  ["layers", "A-02-01-GA Plans"],
  ["hatch", "Entire Model"],
  ["pen", "06-Penset-GA-100-..."],
  ["mvo", "03-MVO-Production"],
  ["override", "No Overrides"],
  ["renovation", "06-Renovation-Pr..."],
  ["mainModel", "Main Model Only"],
  ["dims", "01-Dims-Millimeter"],
];

const sections = [
  "01 Building Section", "01 Enabling Works", "02 Enabling Works", "03 Enabling Works", "04 Enabling Works",
  "A-A Building Sectio", "A-B Building Sectio", "B-B Building Sectio", "C-C Building Sectio", "D-D Building Sectio",
  "SR-01 Building Sect", "SR-02 Building Sect", "SR-03 Building Sect", "SR-04 Building Sect",
  "SR-05 Building Sect", "SR-06 Building Sect", "SR-07 Building Sect", "SR-08 Building Sect",
];

const tree = [
  { icon: "story", text: "1. Ground Floor", depth: 1 },
  { icon: "story", text: "0. Lower Ground Fl", depth: 1 },
  { icon: "story", text: "-1. F1-Foundations", depth: 1 },
  { icon: "sectionGrey", text: "Sections", open: true },
  ...sections.map((text) => ({ icon: "section", text, depth: 1 })),
  { icon: "elevationGrey", text: "Elevations", open: true },
  ...[1, 2, 3, 4].map((n) => ({ icon: "elevation", text: `E-0${n} Elevation (Auto`, depth: 1 })),
  { icon: "interior", text: "Interior Elevations" },
  { icon: "pencilGrey", text: "Worksheets", open: true },
  { icon: "pencil", text: "01 WorksheeSte Se", depth: 1 },
  { icon: "pencil", text: "Denham Benn Temp", depth: 1 },
];

/* ---------- parts ---------- */

const Tools = () => (
  <ToolBar>
    {tools.map((item, i) => {
      if (item === "|") return <ToolRule key={i} />;
      if (item === "_") return <ToolGap key={i} />;
      const on = item.includes("*");
      const wide = item.includes("+");
      const name = item.replace(/[*+]/g, "");
      if (name === "v") {
        return <ToolButton key={i} $caret $on={on} aria-label="More"><Caret /></ToolButton>;
      }
      return <ToolButton key={i} $wide={wide} $on={on} aria-label={name}><Icon name={name} /></ToolButton>;
    })}
  </ToolBar>
);

const Info = () => (
  <InfoBox>
    <InfoCell>
      <InfoLabel>Main:</InfoLabel>
      <InfoBody>
        <Small>Selected: 1<br />Editable: 1</Small>
        <Split aria-label="Roof settings"><Icon name="roof" /><SplitRule /><Caret /></Split>
      </InfoBody>
    </InfoCell>
    <InfoCell>
      <InfoLabel>Layer:</InfoLabel>
      <InfoBody>
        <BoxButton $grow><Icon name="eye" /><BoxText>A-EF_30_10-Roof</BoxText><Caret $right /></BoxButton>
      </InfoBody>
    </InfoCell>
    <InfoCell>
      <InfoLabel>Geometry Method:</InfoLabel>
      <InfoBody $gap={0}>
        <Method aria-label="Single plane"><Icon name="trapezoid" /></Method>
        <Method $disabled aria-label="Multi plane"><Icon name="trapezoidEdge" /></Method>
      </InfoBody>
    </InfoCell>
    <InfoCell>
      <InfoLabel>Construction Method:</InfoLabel>
      <InfoBody $gap={0}>
        <Method aria-label="Polygon"><Icon name="poly" /></Method>
        <Method $on aria-label="Rectangle"><Icon name="rectPoly" /></Method>
        <Method aria-label="Rotated rectangle"><Icon name="rotRect" /></Method>
      </InfoBody>
    </InfoCell>
    <InfoCell>
      <InfoLabel>Structure:</InfoLabel>
      <InfoBody>
        <BoxButton aria-label="Structure type"><Icon name="plank" /><Caret $right /></BoxButton>
        <BoxButton $grow><Icon name="composite" /><BoxText>ROOF-TYP-01</BoxText><Caret $right /></BoxButton>
      </InfoBody>
    </InfoCell>
    <InfoCell>
      <InfoLabel>Floor Plan and Section:</InfoLabel>
      <InfoBody>
        <BoxButton $grow><Icon name="planSection" /><BoxText>Floor Plan and Section...</BoxText><Caret $right /></BoxButton>
      </InfoBody>
    </InfoCell>
    <InfoCell>
      <InfoLabel>Linked Stories:</InfoLabel>
      <InfoBody>
        <Stack>
          <StackRow>Home Story:</StackRow>
          <StackRow $between>
            <span />
            <Icon name="homeStory" />
            <span>1. Ground Floor (Cu...</span>
            <TinyButton aria-label="Choose story"><Caret $right /></TinyButton>
          </StackRow>
        </Stack>
      </InfoBody>
    </InfoCell>
    <InfoCell>
      <InfoLabel>Roof Pivot Height and Pitch:</InfoLabel>
      <InfoBody $gap={12}>
        <Icon name="pitch" />
        <Stack>
          <StackRow $between>
            <span><Field $w={78} defaultValue="40.00°" aria-label="Pitch" /> °</span>
            <TinyButton aria-label="Pitch options"><Caret $right /></TinyButton>
          </StackRow>
          <StackRow $between>
            <Field $w={112} defaultValue="-658" aria-label="Pivot height" />
            <TinyButton aria-label="Height options"><Caret $right /></TinyButton>
          </StackRow>
        </Stack>
      </InfoBody>
    </InfoCell>
    <InfoCell>
      <InfoLabel>Thickness:</InfoLabel>
      <InfoBody>
        <BoxButton $disabled aria-label="Thickness method"><Icon name="thick" /><Caret $right $light /></BoxButton>
        <Field $w={131} disabled defaultValue="783" aria-label="Thickness" />
      </InfoBody>
    </InfoCell>
    <InfoCell>
      <InfoLabel>Eaves Overhang:</InfoLabel>
      <InfoBody>
        <Method $on aria-label="Offset"><Icon name="eaves" /></Method>
        <Method aria-label="Manual"><Icon name="eavesEdit" /></Method>
        <Stack>
          <CenterLabel htmlFor="offset">Offset:</CenterLabel>
          <Field $w={88} id="offset" defaultValue="0" />
        </Stack>
      </InfoBody>
    </InfoCell>
    <InfoCell>
      <InfoLabel>Cover Fill:</InfoLabel>
      <InfoBody>
        <BoxButton $focus aria-label="Cover fill"><Icon name="coverFill" /></BoxButton>
        <BoxButton $grow aria-label="Fill pattern"><Icon name="composite" /></BoxButton>
      </InfoBody>
    </InfoCell>
  </InfoBox>
);

const nodes = [[403, 106], [1307, 106], [709, 412], [1001, 412], [403, 718], [1307, 718]];

const RoofPlan = () => (
  <Plan>
    <path d="M300.500 0V2000M695.500 0V2000M1089.500 0V2000M1484.500 0V2000M0 377.500H3000M0 771.500H3000" stroke="#dadada" />
    <path d="M403 106h904v612H403z" fill="#cde5ce" />
    <path d="M403 106l306 306h292l306-306M403 718l306-306M1307 718l-306-306" fill="none" stroke="#2cb02c" strokeWidth="1.5" />
    <path d="M403.500 105.500h904v613h-904z" fill="none" stroke="#0000f5" strokeWidth="3" />
    <path d="M403.500 105.500h904v613h-904z" fill="none" stroke="#0a7a50" />
    <path d="M855.500 107v10M855.500 717v-10M405 411.500h10M1306 411.500h-10" stroke="#0000f5" strokeWidth="3" />
    {nodes.map(([x, y]) => <circle key={`${x}-${y}`} cx={x} cy={y} r="3.2" />)}
    <path d="M14 822h31.500v-29M45.500 791l-3.500 8M45.500 791l3.500 8M13 822l9-3.500M13 822l9 3.500" fill="none" stroke="#4d4d4d" strokeWidth="2" />
  </Plan>
);

const NavigatorPanel = () => {
  const [selected, setSelected] = useState(0);
  return (
    <Navigator>
      <Grip $w={68} />
      <NavModes>
        <NavMode $on aria-label="Project map"><Icon name="house" /></NavMode>
        <NavRule />
        <NavMode aria-label="View map"><Icon name="houseFrame" /></NavMode>
        <NavMode aria-label="Layout book"><Icon name="viewBook" /></NavMode>
        <NavMode aria-label="Publisher"><Icon name="publisher" /></NavMode>
        <NavMenu aria-label="Options"><Icon name="menu" /><Caret $right /></NavMenu>
      </NavModes>
      <SearchBox>
        <Icon name="search" />
        <SearchInput placeholder="Search Project Map" aria-label="Search Project Map" />
      </SearchBox>
      <TreeWrap>
        <Tree role="tree">
          {tree.map((row, i) => (
            <TreeRow key={row.text} role="treeitem" $depth={row.depth} $on={i === selected} onClick={() => setSelected(i)}>
              {!row.depth && <Twisty>{row.open && <Icon name="chevDown" />}</Twisty>}
              <Icon name={row.icon} />
              <span>{row.text}</span>
            </TreeRow>
          ))}
        </Tree>
        <VScroll>
          <VEnd $first aria-label="Scroll up"><Icon name="chevUp" /></VEnd>
          <VThumb />
          <VEnd aria-label="Scroll down"><Icon name="chevDown" /></VEnd>
        </VScroll>
      </TreeWrap>
      <HScroll>
        <Icon name="chevLeft" />
        <HThumb />
        <Icon name="chevRight" />
      </HScroll>
      <NavActions>
        <BareButton aria-label="Add"><Icon name="add" /></BareButton>
        <BareButton aria-label="Edit"><Icon name="listBlue" /></BareButton>
        <BareButton aria-label="Delete"><Icon name="remove" /></BareButton>
      </NavActions>
      <PropHeader><Caret />Properties</PropHeader>
      <PropRow>
        <Icon name="folder" />
        <PropId htmlFor="story-name">1.</PropId>
        <Field $w={130} id="story-name" defaultValue="Ground Floor" />
      </PropRow>
      <Settings>Settings...</Settings>
    </Navigator>
  );
};

export default function App() {
  const [tab, setTab] = useState(0);
  return (
    <Shell>
      <GlobalStyle />
      <MenuBar>
        {menus.map((m, i) => <MenuItem key={m} $open={i === 0}>{m}</MenuItem>)}
        <WindowButtons>
          <svg width="32" height="12" fill="none" stroke="#333" aria-hidden="true">
            <path d="M0 9h8M15 4.500h5v5h-5zM29 4l6 5M29 9l6-5" strokeWidth="2" />
            <path d="M17 1.500h5.500v6" />
          </svg>
        </WindowButtons>
      </MenuBar>
      <Tools />
      <Info />
      <Middle>
        <Toolbox>
          <Grip $w={18} />
          <ToolList>
            <ToolItem aria-label="Arrow"><Icon name="arrow" /></ToolItem>
            <ToolItem aria-label="Marquee"><Icon name="marquee" /></ToolItem>
          </ToolList>
          <ToolHeader>Design</ToolHeader>
          <ToolList>
            {designTools.map((t) => (
              <ToolItem key={t} aria-label={t}><ToolFace $on={t === "roof"}><Icon name={t} /></ToolFace></ToolItem>
            ))}
          </ToolList>
          <ToolHeader>Viewpoi</ToolHeader>
          <ToolHeader>Docume</ToolHeader>
        </Toolbox>
        <Work>
          <TabBar role="tablist">
            <TabGrid aria-label="All tabs"><Icon name="grid4" /></TabGrid>
            {tabs.map(([icon, text], i) => (
              <Tab key={text} role="tab" $on={i === tab} onClick={() => setTab(i)}>
                <Icon name={icon} />
                <TabText>{text}</TabText>
                {i === tab && (
                  <svg width="12" height="8" stroke="#222" strokeWidth="2" aria-hidden="true">
                    <path d="M1 1l6 6M7 1L1 7" />
                  </svg>
                )}
              </Tab>
            ))}
            <TabMore aria-label="Tab options"><Icon name="modelList" /><Caret /></TabMore>
          </TabBar>
          <Canvas>
            <RoofPlan />
            <EyeTab aria-label="Quick options"><Icon name="quickEye" /></EyeTab>
          </Canvas>
          <StatusBar>
            <ZoomGroup>
              <BareButton aria-label="Previous zoom"><Icon name="zoomBack" /></BareButton>
              <BareButton aria-label="Next zoom"><Icon name="zoomNext" /></BareButton>
              <BareButton aria-label="Zoom in"><Icon name="zoomIn" /></BareButton>
            </ZoomGroup>
            {statuses.map(([icon, text]) => (
              <Status key={text}>
                <Icon name={icon} />
                <StatusText>{text}</StatusText>
                <Caret $right />
              </Status>
            ))}
          </StatusBar>
        </Work>
        <NavigatorPanel />
      </Middle>
      <BottomBar>
        <BottomItem $w={28} aria-label="Windows"><Icon name="windows" /></BottomItem>
        <BottomItem $w={130}>GRAPHISOFT<Thin>ID</Thin></BottomItem>
        <BottomItem $w={16} aria-label="More" />
      </BottomBar>
    </Shell>
  );
}
